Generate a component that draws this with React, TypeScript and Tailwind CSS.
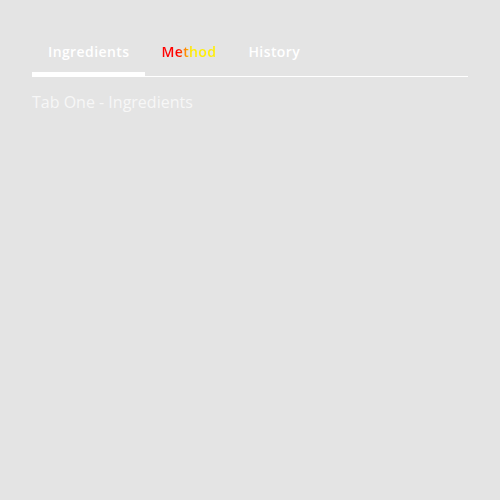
import React, { useState } from "react";

const tabs = ["Ingredients", "Method", "History"];

export default function App() {
  const [active, setActive] = useState(0);

  return (
    <div
      className="min-h-[500px] w-full bg-[#e4e4e4] px-8 pt-[31px]"
      style={{ fontFamily: '"Open Sans", sans-serif' }}
    >
      <div className="flex border-b border-white">
        {tabs.map((tab, i) => (
          <button
            key={tab}
            onClick={() => setActive(i)}
            className={`h-[45px] px-4 text-[14px] font-semibold leading-5 tracking-[0.4px] border-b-4 ${
              i === active ? "border-white" : "border-transparent"
            } ${i === 1 ? "" : "text-white"}`}
          >
            {i === 1 ? (
              <span className="bg-[linear-gradient(90deg,#ff0000_0%,#ff0000_30%,#ffee00_55%,#ffee00_100%)] bg-clip-text text-transparent">
                {tab}
              </span>
            ) : (
              tab
            )}
          </button>
        ))}
      </div>
      <div className="mt-[13px] text-[16px] leading-6 text-[#f7f7f7]">
        Tab One - {tabs[active]}
      </div>
    </div>
  );
}
